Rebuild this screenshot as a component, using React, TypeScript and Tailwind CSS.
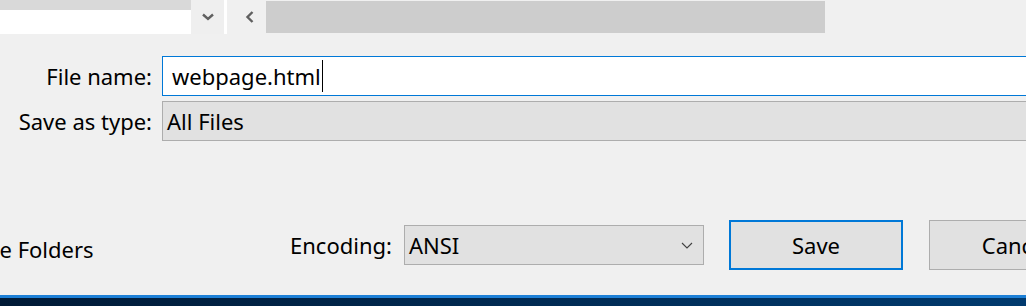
import React from "react";

const font = { fontFamily: '"Noto Sans", "Open Sans", sans-serif' };

export default function App() {
  return (
    <div
      className="w-[1026px] h-[306px] bg-[#f0f0f0] flex flex-col overflow-hidden text-black text-[22px] leading-none"
      style={font}
    >
      {/* top strip */}
      <div className="h-[34px] flex items-start shrink-0">
        <div className="w-[191px] shrink-0 flex flex-col">
          <div className="h-[10px] bg-[#d9d9d9]" />
          <div className="h-[24px] bg-white" />
        </div>
        <div className="w-[33px] h-[34px] shrink-0 bg-[#efefef] flex items-center justify-center">
          <svg width="12" height="8" viewBox="0 0 12 8">
            <path d="M1 1.5 L6 6 L11 1.5" fill="none" stroke="#606060" strokeWidth="2.4" />
          </svg>
        </div>
        <div className="w-[3px] h-[34px] shrink-0 bg-white" />
        <div className="w-[5px] shrink-0" />
        <div className="mt-[1px] w-[34px] h-[32px] shrink-0 bg-[#f0f0f0] flex items-center justify-center">
          <svg width="9" height="12" viewBox="0 0 9 12">
            <path d="M7.5 1 L2.5 6 L7.5 11" fill="none" stroke="#606060" strokeWidth="2.4" />
          </svg>
        </div>
        <div className="mt-[1px] w-[559px] h-[32px] shrink-0 bg-[#cdcdcd]" />
      </div>

      {/* form rows */}
      <div className="mt-[22px] flex flex-col gap-[5px] shrink-0">
        <div className="flex items-center">
          <div className="w-[152px] shrink-0 text-right whitespace-nowrap">File name:</div>
          <div className="ml-[10px] w-[900px] h-[40px] shrink-0 border border-[#0078d7] bg-white flex items-center pl-[9px]">
            <span>webpage.html</span>
            <span className="ml-[1px] w-[1px] h-[32px] bg-black" />
          </div>
        </div>
        <div className="flex items-center">
          <div className="w-[152px] shrink-0 text-right whitespace-nowrap">Save as type:</div>
          <div className="ml-[10px] w-[900px] h-[40px] shrink-0 border border-[#adadad] bg-[#e1e1e1] flex items-center pl-[4px]">
            All Files
          </div>
        </div>
      </div>

      {/* bottom row */}
      <div className="mt-[79px] h-[50px] flex items-center shrink-0">
        <div className="w-[290px] shrink-0 overflow-hidden flex">
          <span className="ml-[-36px] mt-[8px] whitespace-nowrap">Hide Folders</span>
        </div>
        <div className="w-[104px] shrink-0 whitespace-nowrap">Encoding:</div>
        <div className="ml-[10px] w-[300px] h-[40px] shrink-0 border border-[#adadad] bg-[#e1e1e1] flex items-center justify-between pl-[4px] pr-[10px]">
          <span>ANSI</span>
          <svg width="12" height="7" viewBox="0 0 12 7">
            <path d="M1 1 L6 6 L11 1" fill="none" stroke="#404040" strokeWidth="1.1" />
          </svg>
        </div>
        <div className="ml-[25px] w-[174px] h-[50px] shrink-0 border-2 border-[#0078d7] bg-[#e1e1e1] flex items-center justify-center">
          Save
        </div>
        <div className="ml-[26px] w-[174px] h-[50px] shrink-0 border border-[#adadad] bg-[#e1e1e1] flex items-center justify-center">
          Cancel
        </div>
      </div>

      {/* taskbar */}
      <div className="mt-[25px] h-[3px] bg-[#1c7fd6] shrink-0" />
      <div className="flex-1 bg-gradient-to-r from-[#001a36] via-[#002a52] to-[#003a6e]" />
    </div>
  );
}
